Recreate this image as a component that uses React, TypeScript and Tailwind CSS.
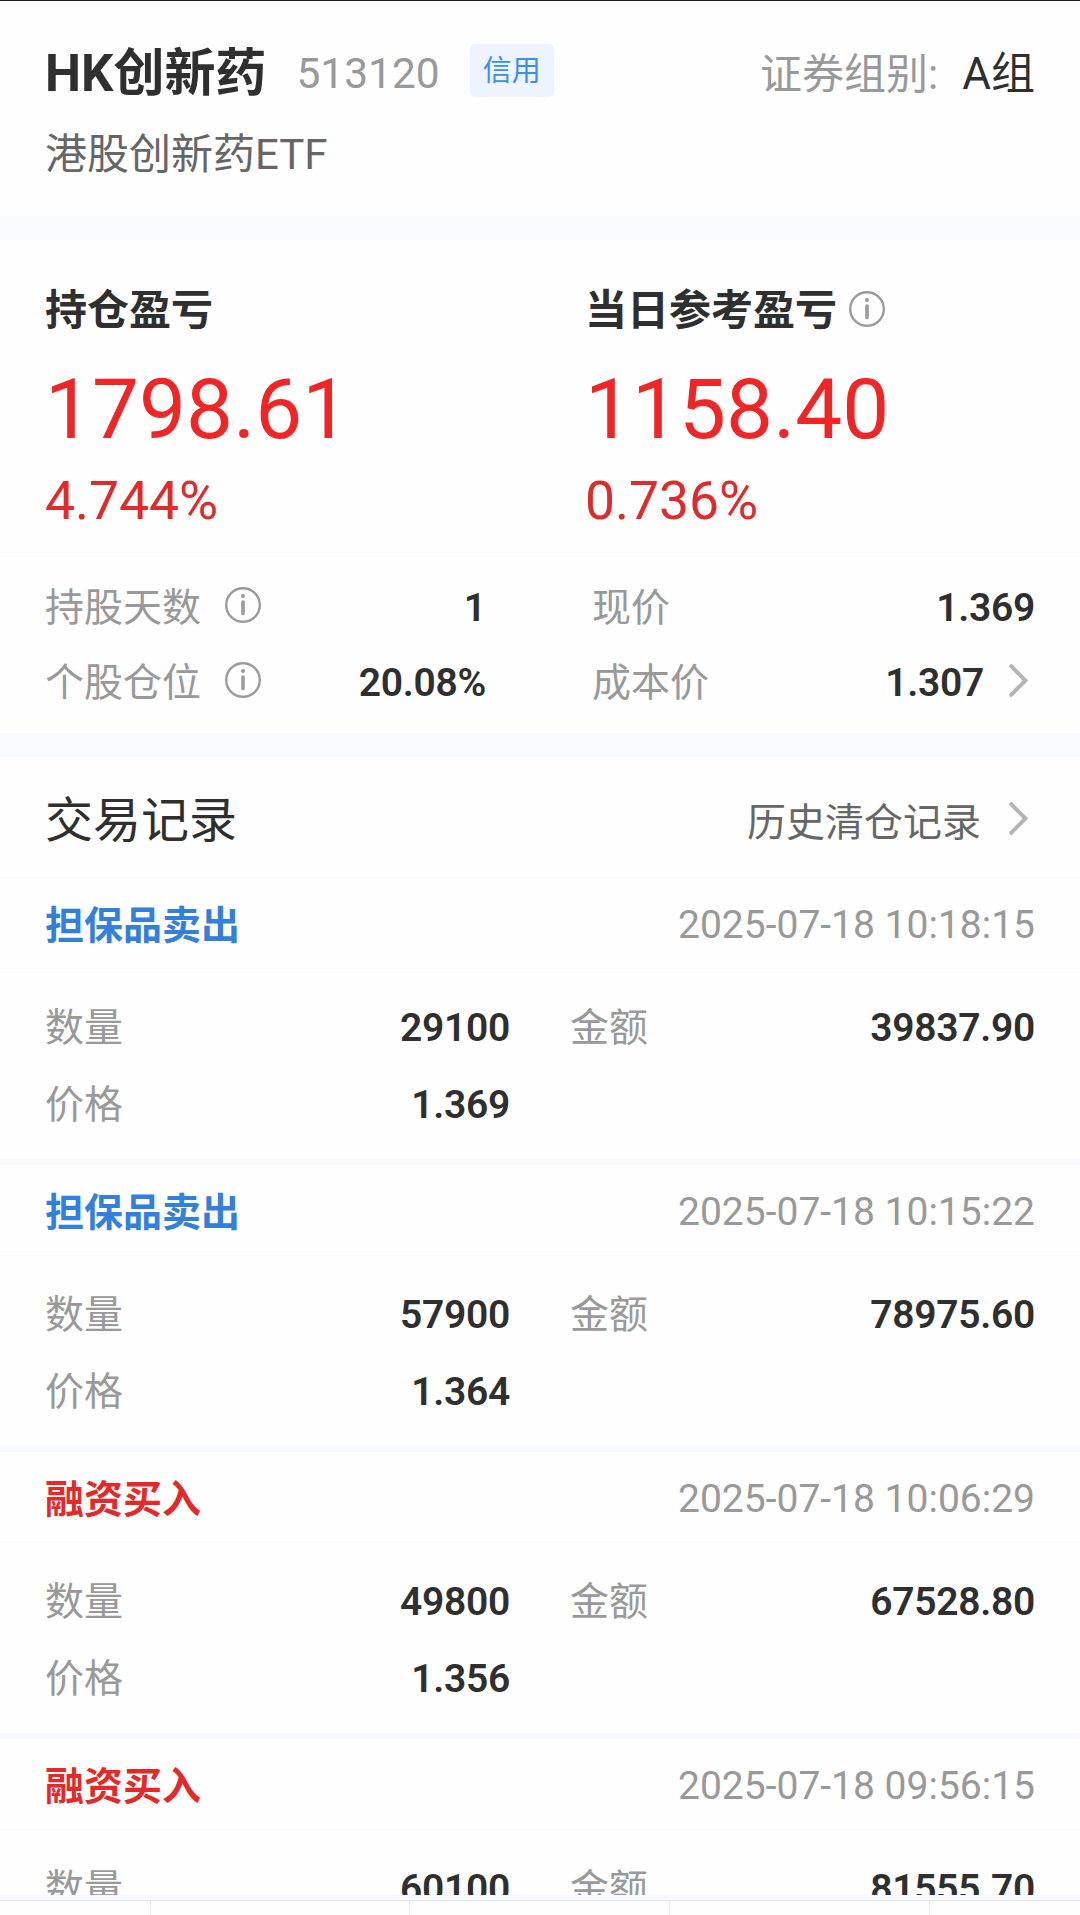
import clsx from 'clsx'

interface Trade {
  kind: 'sell' | 'buy'
  time: string
  quantity: string
  amount: string
  price: string
}

const trades: Trade[] = [
  { kind: 'sell', time: '2025-07-18 10:18:15', quantity: '29100', amount: '39837.90', price: '1.369' },
  { kind: 'sell', time: '2025-07-18 10:15:22', quantity: '57900', amount: '78975.60', price: '1.364' },
  { kind: 'buy', time: '2025-07-18 10:06:29', quantity: '49800', amount: '67528.80', price: '1.356' },
  { kind: 'buy', time: '2025-07-18 09:56:15', quantity: '60100', amount: '81555.70', price: '' },
]

function InfoIcon() {
  return (
    <svg viewBox="0 0 36 36" className="size-9 shrink-0 text-[#9c9a9d]" fill="none" stroke="currentColor">
      <circle cx="18" cy="18" r="16.8" strokeWidth="2.4" />
      <path d="M18 15V26.6" strokeWidth="3.6" strokeLinecap="round" />
      <circle cx="18" cy="9" r="2.1" fill="currentColor" stroke="none" />
    </svg>
  )
}

function Chevron() {
  return (
    <svg viewBox="0 0 19 33" className="h-[33px] w-[19px] shrink-0 text-[#b6b4b7]" fill="none" stroke="currentColor">
      <path d="M2.2 2.2L16.4 16.5L2.2 30.8" strokeWidth="4" strokeLinecap="round" />
    </svg>
  )
}

// label on the left, bold number on the right
function Field({ label, value }: { label: string; value: string }) {
  return (
    <div className="flex justify-between">
      <span className="text-[#999]">{label}</span>
      <span className="font-semibold tracking-[-0.3px]">{value}</span>
    </div>
  )
}

function TradeRecord({ trade }: { trade: Trade }) {
  const isSell = trade.kind === 'sell'

  return (
    <section className="h-[287px] shrink-0 border-b-[6px] border-[#f6faff]">
      <div className="flex h-[91px] items-center justify-between border-b border-[#fafafa] px-[45px] pt-[5px]">
        <h3 className={clsx('pt-[2px] font-bold', isSell ? 'text-[#3380dc]' : 'text-[#e52828]')}>
          {isSell ? '担保品卖出' : '融资买入'}
        </h3>
        <span className="text-[#999]">{trade.time}</span>
      </div>
      <div className="grid grid-cols-[465px_465px] gap-x-[60px] px-[45px] pt-[21px] leading-[77px]">
        <Field label="数量" value={trade.quantity} />
        <Field label="金额" value={trade.amount} />
        {trade.price && <Field label="价格" value={trade.price} />}
      </div>
    </section>
  )
}

export default function App() {
  return (
    <main className="flex h-[1915px] w-[1080px] flex-col overflow-hidden bg-[#fefefe] font-[Roboto,'Noto_Sans_CJK_SC',sans-serif] text-[39px] text-[#2f2f2f]">
      <div className="flex h-[1895px] flex-col overflow-hidden">
        {/* security name */}
        <header className="h-[216px] shrink-0 border-t border-[#1a1a1a] px-[45px] pt-[43px]">
          <div className="flex h-[60px] items-center">
            <h1 className="text-[51px] font-bold">HK创新药</h1>
            <span className="ml-[30px] text-[42.5px] text-[#999]">513120</span>
            <span className="mb-[7px] ml-[30px] flex h-[53px] w-[84px] items-center justify-center rounded-md bg-[#edf3ff] pt-[2px] text-[29px] text-[#3c8fec]">
              信用
            </span>
            <span className="ml-auto text-[42px] text-[#999]">证券组别:</span>
            <span className="ml-[24px] text-[44px]">A组</span>
          </div>
          <p className="mt-[21px] text-[42px] leading-[60px] text-[#666]">港股创新药ETF</p>
        </header>
        <div className="h-6 shrink-0 bg-[#f6faff]" />

        {/* profit and loss */}
        <section className="h-[493px] shrink-0">
          <div className="grid h-[313px] grid-cols-[540px_1fr] border-b border-[#fafafa] pl-[45px] pt-[41px]">
            <div>
              <h2 className="text-[42px] leading-[60px] font-bold">持仓盈亏</h2>
              <p className="mt-[18px] text-[83.7px] leading-[100px] text-[#f02525]">1798.61</p>
              <p className="mt-[12px] text-[53.4px] leading-[60px] text-[#df2b2b]">4.744%</p>
            </div>
            <div>
              <h2 className="flex items-center gap-[12px] text-[42px] leading-[60px] font-bold">
                当日参考盈亏
                <span className="mb-[4px]">
                  <InfoIcon />
                </span>
              </h2>
              <p className="mt-[18px] text-[83.7px] leading-[100px] text-[#f02525]">1158.40</p>
              <p className="mt-[12px] text-[53.4px] leading-[60px] text-[#df2b2b]">0.736%</p>
            </div>
          </div>
          <div className="grid grid-cols-[441px_443px] gap-x-[106px] px-[45px] pt-[18px] leading-[75px]">
            <div className="flex items-center">
              <span className="text-[#999]">持股天数</span>
              <span className="mb-2 ml-6">
                <InfoIcon />
              </span>
              <span className="ml-auto font-semibold">1</span>
            </div>
            <Field label="现价" value="1.369" />
            <div className="flex items-center">
              <span className="text-[#999]">个股仓位</span>
              <span className="mb-2 ml-6">
                <InfoIcon />
              </span>
              <span className="ml-auto font-semibold tracking-[-0.3px]">20.08%</span>
            </div>
            <div className="flex items-center">
              <span className="text-[#999]">成本价</span>
              <span className="ml-auto mr-[25px] font-semibold tracking-[-0.3px]">1.307</span>
              <span className="mb-[6px] mr-[7px]">
                <Chevron />
              </span>
            </div>
          </div>
        </section>
        <div className="h-6 shrink-0 bg-[#f6faff]" />

        {/* trade history */}
        <div className="flex h-[121px] shrink-0 items-center border-b border-[#fafafa] pt-[2px] pr-[52px] pl-[45px]">
          <h2 className="mt-[5px] text-[48px]">交易记录</h2>
          <span className="mt-[10px] ml-auto mr-[28px] text-[#666]">历史清仓记录</span>
          <Chevron />
        </div>
        {trades.map((trade) => (
          <TradeRecord key={trade.time} trade={trade} />
        ))}
      </div>

      {/* top edge of the bottom tab bar */}
      <nav className="flex h-5 shrink-0 flex-col bg-[#f6faff] pt-[5px]">
        <div className="grid flex-1 grid-cols-[151px_259px_260px_260px_150px] divide-x divide-[#ececf0] border-t border-[#e6e6ec] bg-[#fefefe]">
          <div />
          <div />
          <div />
          <div />
          <div />
        </div>
      </nav>
    </main>
  )
}
